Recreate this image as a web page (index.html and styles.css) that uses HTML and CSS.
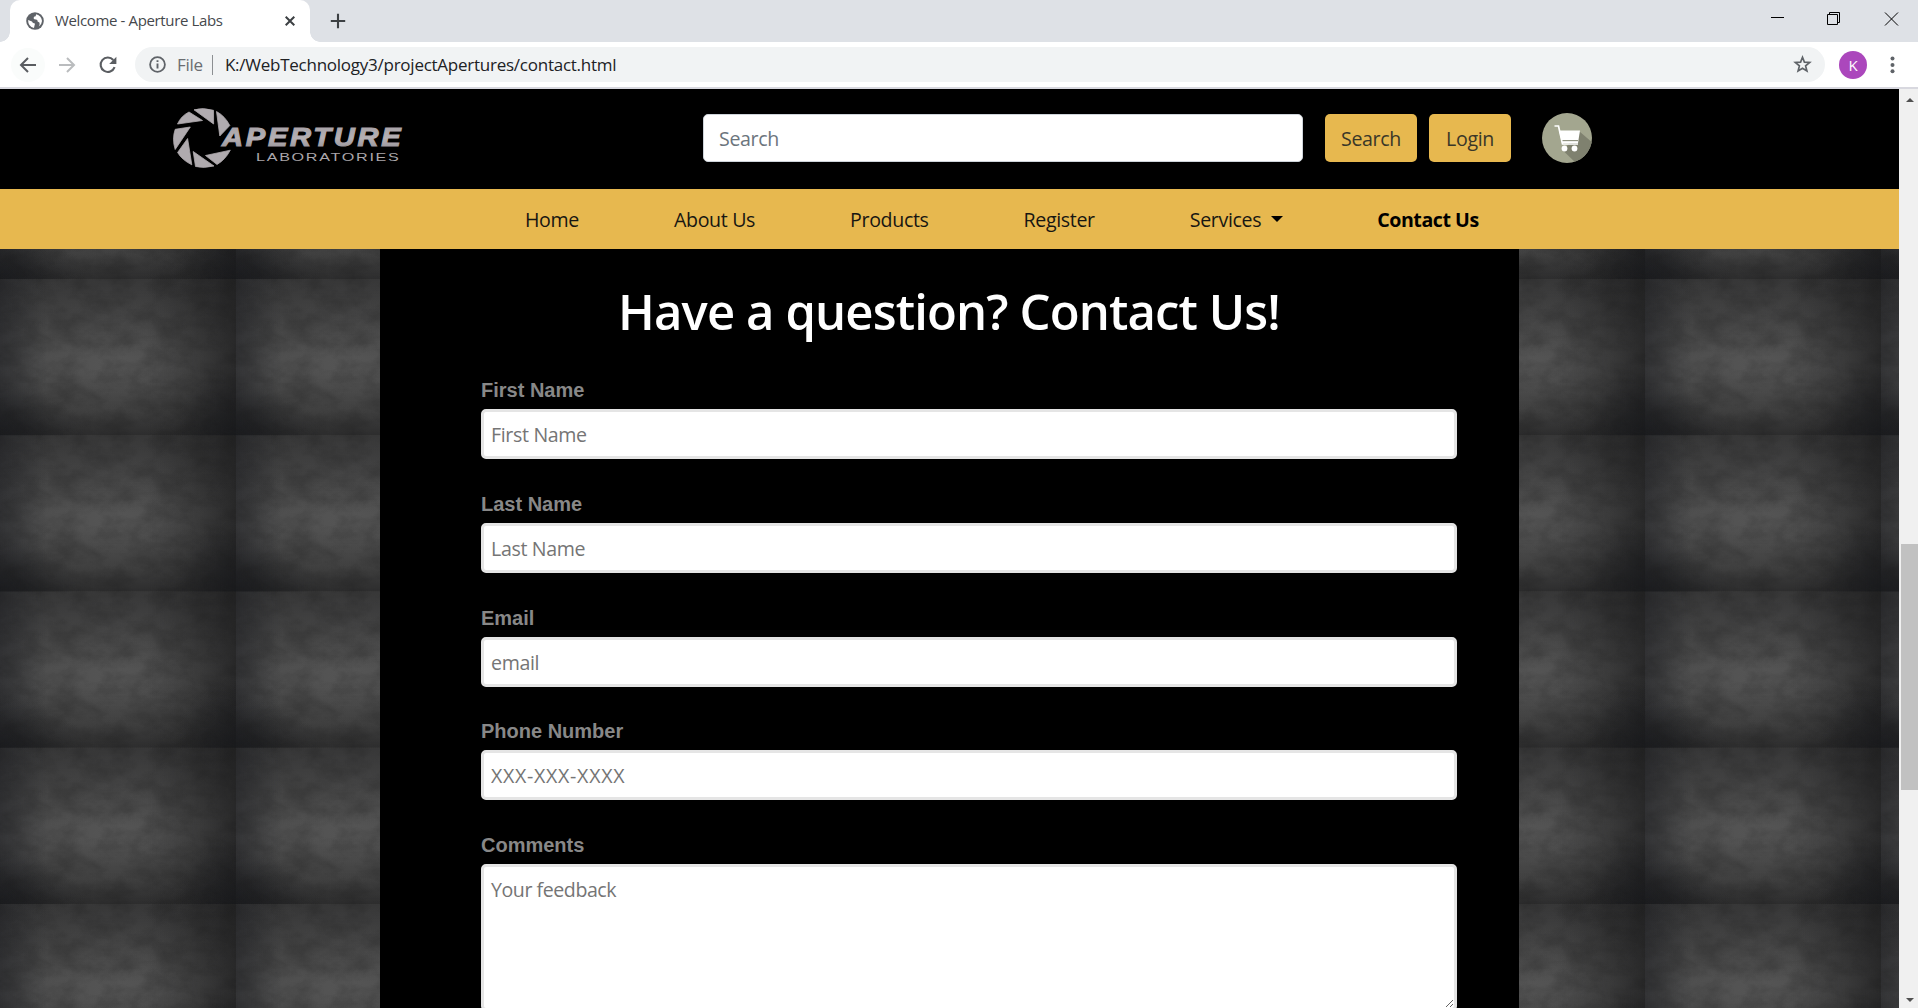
FILE: index.html
```html
<!DOCTYPE html>
<html lang="en">
<head>
<meta charset="utf-8">
<title>Welcome - Aperture Labs</title>
<link rel="stylesheet" href="styles.css">
</head>
<body>
<div class="tabstrip">
  <div class="tab">
    <svg class="globe" width="18" height="18" viewBox="0 0 18 18"><circle cx="9" cy="9" r="8.8" fill="#5f6368"/><path d="M10.2 2.2 L9.6 4.2 Q7.4 4.3 7.6 6.3 Q7.8 7.6 10 7.6 Q11.8 7.8 11.6 9.6 L13.4 10.4 Q14.2 12 12.8 14.6 Q15.8 12.6 16 9 Q15.6 3.8 10.2 2.2 Z M2.1 8 L6 9.4 Q6.6 11.4 8.2 11.2 Q9.6 11.4 8.6 13.2 L8 15.9 Q2 14.6 2.1 8 Z" fill="#fff"/></svg>
    <span class="tab-title">Welcome - Aperture Labs</span>
    <svg class="tab-close" width="10" height="10" viewBox="0 0 10 10"><path d="M.7 .7 9.3 9.3M9.3 .7 .7 9.3" stroke="#3c4043" stroke-width="2"/></svg>
  </div>
  <svg class="newtab" width="16" height="16" viewBox="0 0 16 16"><path d="M8 .8V15.2M.8 8H15.2" stroke="#3c4043" stroke-width="2.1"/></svg>
  <svg class="window-buttons" width="130" height="16" viewBox="0 0 130 16" fill="none" stroke="#000"><path d="M1 5.5H14M57.5 2.5H67.5V12.500H57.5ZM59.500 2.500V.5H69.500V10.500H67.500M115 .5 128 13.500M128 .5 115 13.500"/></svg>
</div>
<div class="toolbar">
  <span class="back"><svg width="18" height="18" viewBox="0 0 18 18"><path d="M17 9H2.500M9 2 2 9l7 7" fill="none" stroke="#5a5d61" stroke-width="2"/></svg></span>
  <svg class="forward" width="18" height="18" viewBox="0 0 18 18"><path d="M1 9H15.500M9 2l7 7-7 7" fill="none" stroke="#babcbe" stroke-width="2"/></svg>
  <svg class="reload" width="18" height="18" viewBox="0 0 18 18"><path d="M15.600 11.200A7.200 7.200 0 1 1 14.300 4" fill="none" stroke="#5a5d61" stroke-width="2.100"/><path d="M17.400 .8V8H10.200Z" fill="#5a5d61"/></svg>
  <div class="address">
    <svg width="17" height="17" viewBox="0 0 17 17"><circle cx="8.500" cy="8.500" r="7.400" fill="none" stroke="#5f6368" stroke-width="1.800"/><path d="M8.500 7.500V12.600M8.500 4.300V6.100" stroke="#5f6368" stroke-width="1.900"/></svg>
    <span class="scheme">File</span>
    <span class="url">K:/WebTechnology3/projectApertures/contact.html</span>
    <svg class="star" width="19" height="19" viewBox="0 0 19 19"><path d="M9.500 2.300 11.400 7.100 16.700 7.500 12.600 10.900 13.900 16 9.500 13.200 5.100 16 6.400 10.900 2.300 7.500 7.600 7.100Z" fill="none" stroke="#5f6368" stroke-width="1.700"/></svg>
  </div>
  <span class="avatar">K</span>
  <svg class="dots" width="5" height="18" viewBox="0 0 5 18" fill="#5f6368"><circle cx="2.500" cy="2.500" r="2"/><circle cx="2.500" cy="9" r="2"/><circle cx="2.500" cy="15.300" r="2"/></svg>
</div>
<div class="viewport">
  <div class="page">
    <header class="header">
      <svg class="logo" width="240" height="70" viewBox="0 0 240 70">
        <defs><linearGradient id="metal" x1="0" y1="0" x2="0" y2="1"><stop offset="0" stop-color="#a39ea3"/><stop offset=".55" stop-color="#b5b0b4"/><stop offset="1" stop-color="#8f8b90"/></linearGradient></defs>
        <g fill="#b0abaf" stroke="#b0abaf" stroke-width=".8">
          <path d="M26 5.800Q35 3.200 45.500 6.300L45.600 20Z"/>
          <path d="M48.500 7.500Q57 12 61.800 21.500L51.800 32Z"/>
          <path d="M9.500 20Q13 12 21 8L34.500 16.500Z"/>
          <path d="M7.200 45.500Q3.800 35 7.200 25.300L22.300 23Z"/>
          <path d="M19.600 34.500 23.800 60.800Q14 56 9.600 48.500Z"/>
          <path d="M25.200 47.500 46 62Q36 64.500 27.500 62.500Z"/>
          <path d="M37.500 51.500 62.300 46.200Q57 56 49 60.500Z"/>
        </g>
        <text class="logo-main" x="54" y="42" textLength="181.500" lengthAdjust="spacingAndGlyphs" fill="url(#metal)" stroke="url(#metal)" stroke-width="1.100">APERTURE</text>
        <text class="logo-sub" x="88" y="56.500" textLength="144.500" lengthAdjust="spacingAndGlyphs" fill="#aaa6aa">LABORATORIES</text>
      </svg>
      <input class="search" type="text" placeholder="Search">
      <button class="btn btn-search">Search</button>
      <button class="btn btn-login">Login</button>
      <svg class="cart" width="50" height="50" viewBox="0 0 50 50">
        <clipPath id="disc"><circle cx="25" cy="25" r="25"/></clipPath>
        <g clip-path="url(#disc)"><rect width="50" height="50" fill="#a3a68f"/><path d="M37.500 18.500 52 31V52H36L21 37.500Z" fill="#7f816f"/></g>
        <path d="M12.500 13H16.500L20.500 31H36" fill="none" stroke="#fff" stroke-width="1.700"/>
        <path d="M17 17.500H38L36 30H20Z" fill="#fff"/><path d="M20.500 27.600H36" stroke="#8c8f7c" stroke-width="1.100"/>
        <circle cx="22.500" cy="35.500" r="2.900" fill="#fff"/><circle cx="32.500" cy="35.500" r="2.900" fill="#fff"/>
      </svg>
    </header>
    <nav class="nav">
      <a>Home</a><a>About Us</a><a>Products</a><a>Register</a><a class="dropdown">Services</a><a class="active">Contact Us</a>
    </nav>
    <main class="backdrop">
      <section class="panel">
        <h1>Have a question? Contact Us!</h1>
        <form class="form">
          <label>First Name</label><input class="field" placeholder="First Name">
          <label>Last Name</label><input class="field" placeholder="Last Name">
          <label>Email</label><input class="field" placeholder="email">
          <label>Phone Number</label><input class="field phone" placeholder="XXX-XXX-XXXX">
          <label>Comments</label><textarea class="field comments" placeholder="Your feedback"></textarea>
        </form>
      </section>
    </main>
  </div>
  <div class="scrollbar"><i class="up"></i><i class="thumb"></i><i class="down"></i></div>
</div>
</body>
</html>
```
FILE: styles.css
```css
* { box-sizing: border-box; }
html, body { height: 100%; overflow: hidden; }
body {
  margin: 0;
  display: flex;
  flex-direction: column;
  font-family: "Open Sans", "Noto Sans", sans-serif;
  font-size: 19.6px;
  letter-spacing: -0.35px;
  background: #fff;
}
svg { display: block; flex: none; }
input, textarea, button { font: inherit; letter-spacing: inherit; margin: 0; }

/* Browser window */
.tabstrip { display: flex; height: 42px; flex: none; background: #dee1e6; padding-left: 10px; }
.tab {
  position: relative;
  display: flex;
  align-items: center;
  width: 300px;
  padding: 0 15px 0 16px;
  background: #fff;
  border-radius: 10px 10px 0 0;
}
.tab::before, .tab::after { content: ""; position: absolute; bottom: 0; width: 10px; height: 10px; }
.tab::before { left: -10px; background: radial-gradient(circle at 0 0, transparent 9.5px, #fff 10px); }
.tab::after { right: -10px; background: radial-gradient(circle at 100% 0, transparent 9.5px, #fff 10px); }
.tab-title { flex: 1; margin: 0 0 2px 11px; font-size: 15px; letter-spacing: -0.36px; line-height: 20px; color: #45484c; white-space: nowrap; }
.newtab { margin: 13px 0 0 20px; }
.window-buttons { margin: 12px 18px 0 auto; }

.toolbar { display: flex; align-items: center; height: 47px; flex: none; border-bottom: 2px solid #d8d8df; padding: 0 23px 0 11px; }
.back { display: flex; align-items: center; justify-content: center; width: 34px; height: 34px; border-radius: 50%; background: #fafcfb; }
.forward { margin-left: 13px; }
.reload { margin-left: 23px; }
.address {
  display: flex;
  align-items: center;
  flex: 1;
  height: 35px;
  margin-left: 18px;
  padding: 0 13px 0 14px;
  border-radius: 18px;
  background: #f1f3f4;
  font-size: 17px;
  letter-spacing: -0.25px;
}
.scheme { margin-left: 11px; padding-right: 9px; line-height: 20px; border-right: 1px solid #8c8f92; color: #6a6d71; }
.url { flex: 1; margin-left: 12px; color: #202124; }
.avatar { width: 28px; height: 28px; margin-left: 14px; border-radius: 50%; background: #ab47bc; color: #fff; font-size: 15px; line-height: 28px; text-align: center; }
.dots { margin-left: 23px; }

/* Page */
.viewport { display: flex; flex: 1; min-height: 0; }
.page { display: flex; flex-direction: column; flex: 1; min-width: 0; overflow: hidden; background: #000; }
.header { display: flex; align-items: center; height: 100px; flex: none; padding: 0 0 2px 168px; }
.logo { margin-top: 2px; }
.logo-main { font: italic bold 26.5px "Liberation Sans", Arial, sans-serif; letter-spacing: 2.5px; }
.logo-sub { font: 11.5px "Liberation Sans", Arial, sans-serif; letter-spacing: 1.2px; }
.search { width: 600px; height: 48px; margin-left: 295px; padding: 0 15px; border: 1px solid #ced4da; border-radius: 5px; background: #fff; }
.search::placeholder { color: #6c757d; }
.btn { height: 48px; padding: 0; border: 0; border-radius: 5px; background: #e7b84f; color: #3a3728; }
.btn-search { width: 92px; margin-left: 22px; }
.btn-login { width: 82px; margin-left: 12px; }
.cart { margin-left: 31px; }

.nav { display: flex; align-items: center; gap: 95px; height: 60px; flex: none; padding: 1px 0 0 525px; background: #e7b84f; color: #171612; }
.dropdown { display: flex; align-items: center; }
.dropdown::after { content: ""; margin: 0 -1px 1px 10px; border: 6px solid transparent; border-top-color: #000; border-bottom: 0; }
.active { font-weight: 700; letter-spacing: -0.45px; color: #000; }

/* Concrete wall tile */
.backdrop {
  flex: 1;
  min-height: 0;
  display: flex;
  justify-content: center;
  background-color: #3c3c3c;
  background-image:
    url("data:image/svg+xml,%3Csvg xmlns='http://www.w3.org/2000/svg' width='235' height='156.250'%3E%3Cfilter id='n' x='0' y='0' width='100%25' height='100%25' color-interpolation-filters='sRGB'%3E%3CfeTurbulence type='fractalNoise' baseFrequency='.04 .055' numOctaves='5' seed='21' stitchTiles='stitch'/%3E%3CfeColorMatrix values='0 0 0 0 0.08 0 0 0 0 0.08 0 0 0 0 0.08 1.300 0 0 0 -0.400'/%3E%3C/filter%3E%3Crect width='235' height='156.250' filter='url(%23n)' opacity='.36'/%3E%3C/svg%3E"),
    radial-gradient(ellipse 85px 50px at 0 100%, rgba(22,23,26,.75), rgba(22,23,26,0)),
    radial-gradient(ellipse 60px 70px at 100% 100%, rgba(22,23,26,.75), rgba(22,23,26,0)),
    linear-gradient(to left, rgba(28,28,29,.7), rgba(28,28,29,.4) 14%, rgba(28,28,29,0) 38%),
    linear-gradient(to right, rgba(32,33,37,.55), rgba(32,33,37,0) 20%),
    linear-gradient(to top, rgba(24,24,25,.6), rgba(30,30,30,.3) 16%, rgba(30,30,30,0) 42%),
    linear-gradient(to bottom, rgba(32,32,33,.45), rgba(32,32,33,0) 50%),
    radial-gradient(ellipse 150px 110px at 48% 54%, #555, #474747);
  background-size: 235px 156.250px;
  background-position: 0 30px;
}
.panel { width: 1139px; height: 760px; padding: 32px 62px 0 101px; background: #000; }
h1 { margin: 0 0 34px -40px; font-size: 49px; font-weight: 600; line-height: 60px; letter-spacing: -0.88px; text-align: center; color: #fff; }
.form { display: flex; flex-direction: column; }
label { margin-bottom: 4px; font: bold 20px/30px "Liberation Sans", Arial, sans-serif; letter-spacing: 0; color: #888; }
.field { width: 976px; height: 50px; flex: none; margin-bottom: 29.750px; padding: 1px 7px 0; border: 3px solid #e5e5e5; border-radius: 5px; background: #fff; line-height: 27px; outline: 0; }
.field::placeholder { color: #757575; }
.phone { letter-spacing: 0.700px; }
.comments { height: 147px; padding-top: 9px; letter-spacing: -0.45px; resize: both; overflow: hidden; }

.scrollbar { display: flex; flex-direction: column; align-items: center; width: 19px; flex: none; background: #f0f0f0; }
.up, .down { border: 4.500px solid transparent; }
.up { margin-top: 9px; margin-left: 2px; border-bottom-color: #505050; border-top: 0; }
.thumb { width: 17px; height: 246px; margin: 441.500px 0 0 2px; background: #c1c1c1; }
.down { margin: auto 0 6px 2px; border-top-color: #505050; border-bottom: 0; }
```
